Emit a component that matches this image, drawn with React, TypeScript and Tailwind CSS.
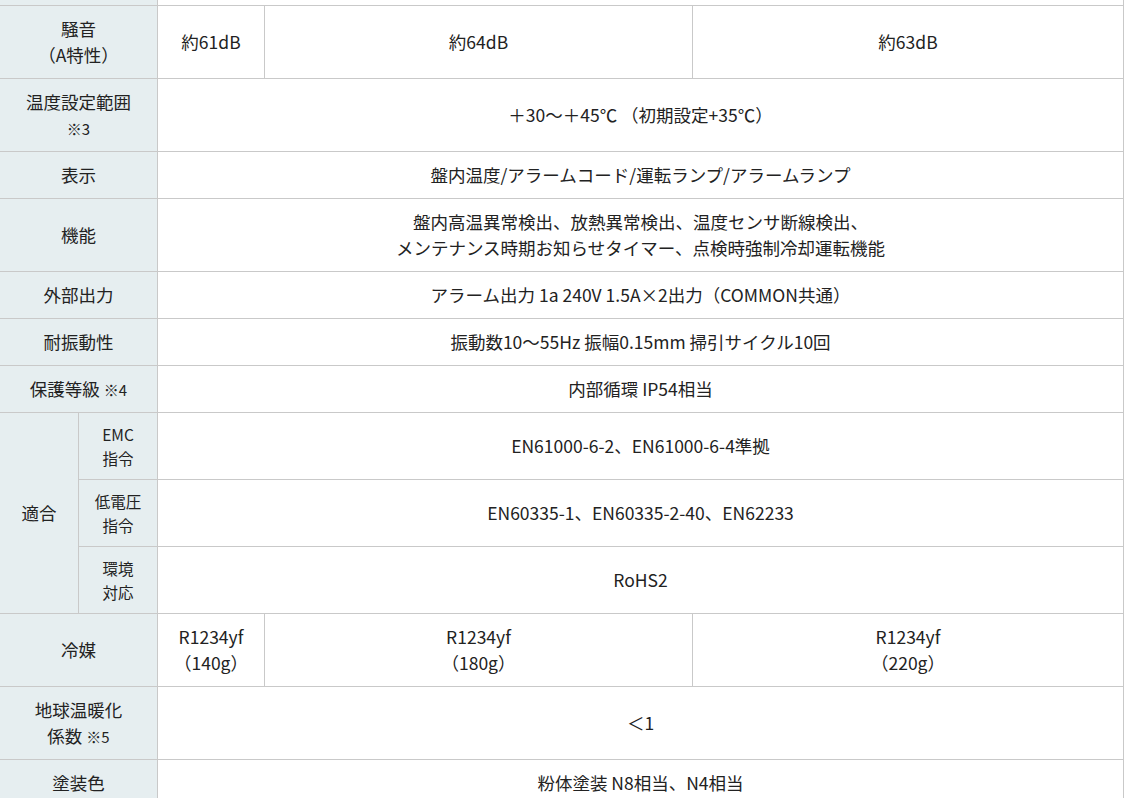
import type { ReactNode } from "react";

const font = {
  fontFamily: '"Noto Sans CJK JP", "Noto Sans", sans-serif',
};

function Head({
  children,
  className = "",
}: {
  children?: ReactNode;
  className?: string;
}) {
  return (
    <div
      className={`flex items-center justify-center border-r border-b border-[#c9c9c9] bg-[#e6eef0] text-center ${className}`}
    >
      <div>{children}</div>
    </div>
  );
}

function Cell({
  children,
  className = "",
}: {
  children?: ReactNode;
  className?: string;
}) {
  return (
    <div
      className={`flex items-center justify-center border-r border-b border-[#c9c9c9] bg-white text-center ${className}`}
    >
      <div>{children}</div>
    </div>
  );
}

function Note({ n }: { n: number }) {
  return <span className="ml-1 text-[15px]">※{n}</span>;
}

export default function App() {
  return (
    <div className="min-h-screen bg-white" style={font}>
      <div className="grid w-[1124px] grid-cols-[79px_79px_107px_428px_431px] grid-rows-[6px_73px_73px_47px_73px_47px_47px_47px_67px_67px_67px_73px_73px_47px] text-[17.5px] leading-[26px] text-[#222]">
        {/* row cut off at the top */}
        <Head className="col-span-2" />
        <Cell className="col-span-3" />

        <Head className="col-span-2">
          騒音
          <br />
          （A特性）
        </Head>
        <Cell>約61dB</Cell>
        <Cell>約64dB</Cell>
        <Cell>約63dB</Cell>

        <Head className="col-span-2">
          温度設定範囲
          <br />
          <span className="text-[15px]">※3</span>
        </Head>
        <Cell className="col-span-3">＋30～＋45℃ （初期設定+35℃）</Cell>

        <Head className="col-span-2">表示</Head>
        <Cell className="col-span-3">
          盤内温度/アラームコード/運転ランプ/アラームランプ
        </Cell>

        <Head className="col-span-2">機能</Head>
        <Cell className="col-span-3">
          盤内高温異常検出、放熱異常検出、温度センサ断線検出、
          <br />
          メンテナンス時期お知らせタイマー、点検時強制冷却運転機能
        </Cell>

        <Head className="col-span-2">外部出力</Head>
        <Cell className="col-span-3">
          アラーム出力 1a 240V 1.5A×2出力（COMMON共通）
        </Cell>

        <Head className="col-span-2">耐振動性</Head>
        <Cell className="col-span-3">
          振動数10～55Hz 振幅0.15mm 掃引サイクル10回
        </Cell>

        <Head className="col-span-2">
          保護等級
          <Note n={4} />
        </Head>
        <Cell className="col-span-3">内部循環 IP54相当</Cell>

        <Head className="row-span-3">適合</Head>
        <Head className="text-[15.5px] leading-[24px]">
          EMC
          <br />
          指令
        </Head>
        <Cell className="col-span-3">EN61000-6-2、EN61000-6-4準拠</Cell>
        <Head className="text-[15.5px] leading-[24px]">
          低電圧
          <br />
          指令
        </Head>
        <Cell className="col-span-3">EN60335-1、EN60335-2-40、EN62233</Cell>
        <Head className="text-[15.5px] leading-[24px]">
          環境
          <br />
          対応
        </Head>
        <Cell className="col-span-3">RoHS2</Cell>

        <Head className="col-span-2">冷媒</Head>
        <Cell>
          R1234yf
          <br />
          （140g）
        </Cell>
        <Cell>
          R1234yf
          <br />
          （180g）
        </Cell>
        <Cell>
          R1234yf
          <br />
          （220g）
        </Cell>

        <Head className="col-span-2">
          地球温暖化
          <br />
          係数
          <Note n={5} />
        </Head>
        <Cell className="col-span-3">＜1</Cell>

        <Head className="col-span-2">塗装色</Head>
        <Cell className="col-span-3">粉体塗装 N8相当、N4相当</Cell>
      </div>
    </div>
  );
}
